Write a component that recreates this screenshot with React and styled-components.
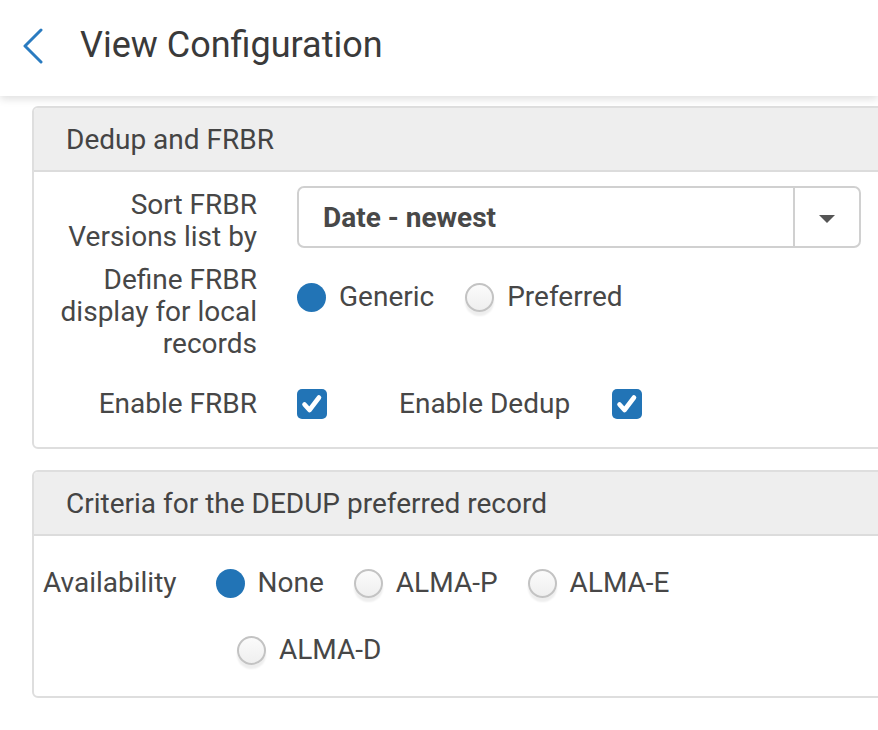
import React from "react";
import styled, { createGlobalStyle } from "styled-components";

const Global = createGlobalStyle`
  html, body { margin: 0; padding: 0; background: #ffffff; }
  body {
    font-family: Roboto, "Liberation Sans", Arial, sans-serif;
    color: #444444;
    overflow: hidden;
  }
  * { box-sizing: border-box; }
`;

const Page = styled.div`
  width: 878px;
  height: 730px;
  overflow: hidden;
  position: relative;
`;

const TopBar = styled.header`
  height: 96px;
  display: flex;
  align-items: center;
  padding-left: 22px;
  gap: 36px;
  background: #ffffff;
  box-shadow: 0 3px 8px rgba(0, 0, 0, 0.13);
  position: relative;
  z-index: 2;
`;

const BackButton = styled.button`
  border: 0;
  background: none;
  padding: 0;
  width: 22px;
  height: 36px;
  display: flex;
  align-items: center;
  justify-content: center;
  margin-top: -4px;
  cursor: pointer;
`;

const Title = styled.h1`
  margin: 0;
  font-size: 36px;
  font-weight: 400;
  color: #3a3a3a;
  line-height: 40px;
  margin-top: -6px;
`;

const Content = styled.main`
  padding: 10px 0 0 32px;
  display: flex;
  flex-direction: column;
  gap: 21px;
`;

const Panel = styled.section`
  width: 880px;
  border: 2px solid #dedede;
  border-radius: 6px;
  overflow: hidden;
  background: #ffffff;
`;

const PanelHeader = styled.div`
  height: 64px;
  background: #eeeeee;
  border-bottom: 2px solid #dcdcdc;
  display: flex;
  align-items: center;
  padding-left: 32px;
  font-size: 28px;
  color: #444444;
`;

const FormBody = styled.div`
  padding: ${(p) => p.$pad};
  display: flex;
  flex-direction: column;
`;

const FormRow = styled.div`
  display: flex;
  align-items: ${(p) => p.$align || "flex-start"};
  margin-top: ${(p) => p.$top || 0}px;
  gap: 40px;
`;

const Label = styled.div`
  width: 223px;
  flex-shrink: 0;
  text-align: right;
  font-size: 28px;
  line-height: 32px;
  color: #474747;
  margin-top: ${(p) => p.$top || 0}px;
`;

const Select = styled.div`
  width: 564px;
  height: 62px;
  border: 2px solid #d0d0d0;
  border-radius: 7px;
  display: flex;
  align-items: stretch;
  background: #ffffff;
`;

const SelectValue = styled.div`
  flex: 1;
  display: flex;
  align-items: center;
  padding-left: 24px;
  font-size: 28px;
  font-weight: 700;
  color: #484848;
  border-right: 2px solid #d0d0d0;
`;

const SelectArrow = styled.div`
  width: 64px;
  display: flex;
  align-items: center;
  justify-content: center;
  padding-top: 4px;
`;

const Triangle = styled.span`
  width: 0;
  height: 0;
  border-left: 8px solid transparent;
  border-right: 8px solid transparent;
  border-top: 8px solid #555555;
`;

const Options = styled.div`
  display: flex;
  align-items: center;
  gap: ${(p) => p.$gap || 31}px;
  margin-top: ${(p) => p.$top || 0}px;
  padding-left: ${(p) => p.$indent || 0}px;
`;

const RadioItem = styled.label`
  display: flex;
  align-items: center;
  gap: 13px;
  font-size: 28px;
  line-height: 32px;
  color: #474747;
`;

const RadioDot = styled.span`
  width: 29px;
  height: 29px;
  border-radius: 50%;
  flex-shrink: 0;
  background: ${(p) =>
    p.$on ? "#2274b6" : "linear-gradient(#fbfbfb, #efefef)"};
  border: ${(p) => (p.$on ? "0" : "2px solid #c3c3c3")};
  box-shadow: ${(p) => (p.$on ? "none" : "0 4px 2px rgba(0,0,0,0.07)")};
`;

const CheckGroup = styled.div`
  display: flex;
  align-items: center;
`;

const CheckBox = styled.span`
  width: 30px;
  height: 30px;
  border-radius: 5px;
  background: #2274b6;
  display: flex;
  align-items: center;
  justify-content: center;
  flex-shrink: 0;
  margin-left: ${(p) => p.$left || 0}px;
`;

const InlineLabel = styled.span`
  font-size: 28px;
  line-height: 32px;
  color: #474747;
  margin-left: ${(p) => p.$left || 0}px;
`;

const AvailRow = styled.div`
  display: flex;
  align-items: center;
  padding-left: 9px;
  gap: 39px;
  margin-top: ${(p) => p.$top || 0}px;
`;

const AvailLabel = styled.span`
  font-size: 28px;
  line-height: 32px;
  color: #474747;
`;

const Check = () => (
  <svg width="22" height="20" viewBox="0 0 22 20">
    <polyline
      points="3.5,10.5 8.5,16 18,3.5"
      fill="none"
      stroke="#ffffff"
      strokeWidth="4.6"
      strokeLinecap="round"
      strokeLinejoin="round"
    />
  </svg>
);

const Radio = ({ on, children }) => (
  <RadioItem>
    <RadioDot $on={on} />
    {children}
  </RadioItem>
);

export default function App() {
  return (
    <Page>
      <Global />
      <TopBar>
        <BackButton aria-label="Back">
          <svg width="22" height="36" viewBox="0 0 22 36">
            <polyline
              points="19,2 3,18 19,34"
              fill="none"
              stroke="#2a7bc0"
              strokeWidth="3"
              strokeLinecap="round"
              strokeLinejoin="round"
            />
          </svg>
        </BackButton>
        <Title>View Configuration</Title>
      </TopBar>
      <Content>
        <Panel>
          <PanelHeader>Dedup and FRBR</PanelHeader>
          <FormBody $pad="14px 0 27px 0">
            <FormRow>
              <Label $top={3}>
                Sort FRBR
                <br />
                Versions list by
              </Label>
              <Select>
                <SelectValue>Date - newest</SelectValue>
                <SelectArrow>
                  <Triangle />
                </SelectArrow>
              </Select>
            </FormRow>
            <FormRow $top={11}>
              <Label>
                Define FRBR
                <br />
                display for local
                <br />
                records
              </Label>
              <Options $top={17}>
                <Radio on>Generic</Radio>
                <Radio>Preferred</Radio>
              </Options>
            </FormRow>
            <FormRow $top={28} $align="center">
              <Label>Enable FRBR</Label>
              <CheckGroup>
                <CheckBox>
                  <Check />
                </CheckBox>
                <InlineLabel $left={72}>Enable Dedup</InlineLabel>
                <CheckBox $left={42}>
                  <Check />
                </CheckBox>
              </CheckGroup>
            </FormRow>
          </FormBody>
        </Panel>
        <Panel>
          <PanelHeader>Criteria for the DEDUP preferred record</PanelHeader>
          <FormBody $pad="31px 0 30px 0">
            <AvailRow>
              <AvailLabel>Availability</AvailLabel>
              <Options $gap={30}>
                <Radio on>None</Radio>
                <Radio>ALMA-P</Radio>
                <Radio>ALMA-E</Radio>
              </Options>
            </AvailRow>
            <Options $top={35} $indent={203}>
              <Radio>ALMA-D</Radio>
            </Options>
          </FormBody>
        </Panel>
      </Content>
    </Page>
  );
}
